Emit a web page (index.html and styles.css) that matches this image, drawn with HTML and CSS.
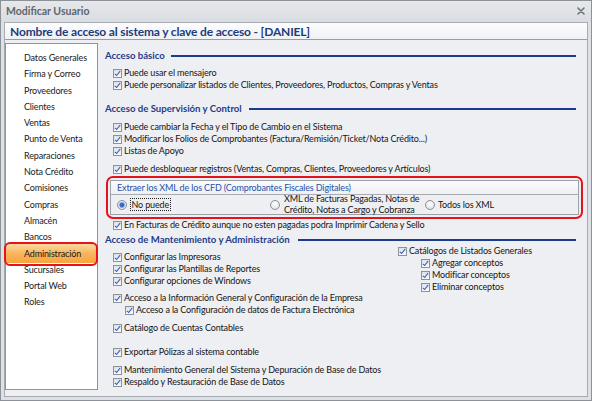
FILE: index.html
```html
<!DOCTYPE html>
<html lang="es">
<head>
<meta charset="utf-8">
<title>Modificar Usuario</title>
<link rel="stylesheet" href="styles.css">
</head>
<body>
<div class="window">
  <div class="titlebar">
    <span class="title">Modificar Usuario</span>
    <svg class="close" width="8" height="8" viewBox="0 0 8 8"><path d="M1 1 L7 7 M7 1 L1 7" stroke="#6f747b" stroke-width="1.6" stroke-linecap="round"/></svg>
  </div>
  <div class="panel">
    <div class="header">Nombre de acceso al sistema y clave de acceso - [DANIEL]</div>
    <div class="main">
      <ul class="sidebar">
        <li>Datos Generales</li>
        <li>Firma y Correo</li>
        <li>Proveedores</li>
        <li>Clientes</li>
        <li>Ventas</li>
        <li>Punto de Venta</li>
        <li>Reparaciones</li>
        <li>Nota Crédito</li>
        <li>Comisiones</li>
        <li>Compras</li>
        <li>Almacén</li>
        <li>Bancos</li>
        <li class="active">Administración</li>
        <li>Sucursales</li>
        <li>Portal Web</li>
        <li>Roles</li>
      </ul>
      <div class="content">
        <div class="sec"><span>Acceso básico</span><i></i></div>
        <div class="row first"><span class="cb"></span>Puede usar el mensajero</div>
        <div class="row"><span class="cb"></span>Puede personalizar listados de Clientes, Proveedores, Productos, Compras y Ventas</div>

        <div class="sec sec-2"><span>Acceso de Supervisión y Control</span><i></i></div>
        <div class="row first"><span class="cb"></span>Puede cambiar la Fecha y el Tipo de Cambio en el Sistema</div>
        <div class="row"><span class="cb"></span>Modificar los Folios de Comprobantes (Factura/Remisión/Ticket/Nota Crédito...)</div>
        <div class="row"><span class="cb"></span>Listas de Apoyo</div>
        <div class="row spaced"><span class="cb"></span>Puede desbloquear registros (Ventas, Compras, Clientes, Proveedores y Artículos)</div>

        <div class="xml">
          <div class="xml-box">
            <div class="xml-title">Extraer los XML de los CFD (Comprobantes Fiscales Digitales)</div>
            <div class="xml-opts">
              <div class="opt opt-1"><span class="radio on"></span><span class="focus">No puede</span></div>
              <div class="opt opt-2"><span class="radio"></span><span class="two">XML de Facturas Pagadas, Notas de<br>Crédito, Notas a Cargo y Cobranza</span></div>
              <div class="opt opt-3"><span class="radio"></span><span>Todos los XML</span></div>
            </div>
          </div>
        </div>
        <div class="row"><span class="cb"></span>En Facturas de Crédito aunque no esten pagadas podra Imprimir Cadena y Sello</div>

        <div class="sec sec-3"><span>Acceso de Mantenimiento y Administración</span><i></i></div>
        <div class="cols">
          <div class="col-left">
            <div class="row"><span class="cb"></span>Configurar las Impresoras</div>
            <div class="row"><span class="cb"></span>Configurar las Plantillas de Reportes</div>
            <div class="row"><span class="cb"></span>Configurar opciones de Windows</div>
            <div class="row gap-s"><span class="cb"></span>Acceso a la Información General y Configuración de la Empresa</div>
            <div class="row sub"><span class="cb"></span>Acceso a la Configuración de datos de Factura Electrónica</div>
            <div class="row spaced"><span class="cb"></span>Catálogo de Cuentas Contables</div>
            <div class="row gap-l"><span class="cb"></span>Exportar Pólizas al sistema contable</div>
            <div class="row spaced"><span class="cb"></span>Mantenimiento General del Sistema y Depuración de Base de Datos</div>
            <div class="row"><span class="cb"></span>Respaldo y Restauración de Base de Datos</div>
          </div>
          <div class="col-right">
            <div class="row"><span class="cb"></span>Catálogos de Listados Generales</div>
            <div class="row sub"><span class="cb"></span>Agregar conceptos</div>
            <div class="row sub"><span class="cb"></span>Modificar conceptos</div>
            <div class="row sub"><span class="cb"></span>Eliminar conceptos</div>
          </div>
        </div>
      </div>
    </div>
  </div>
</div>
</body>
</html>
```
FILE: styles.css
```css
* { box-sizing: border-box; margin: 0; padding: 0; }
html, body { margin: 0; background: #dadde2; }
body {
  font-family: Lato, "Open Sans", "Liberation Sans", sans-serif;
  font-size: 9px;
  letter-spacing: -0.15px;
  color: #151515;
}
.window {
  width: 592px;
  height: 401px;
  border: 1px solid #8d9299;
  background: linear-gradient(#e6e8eb, #d9dce1 21px, #dde0e5 21px);
  padding: 0 3px 3px;
  display: flex;
  flex-direction: column;
}
.titlebar {
  height: 21px;
  flex: none;
  display: flex;
  align-items: center;
  justify-content: space-between;
  padding: 0 3px 1px 2px;
}
.title { font-weight: 700; font-size: 10.5px; letter-spacing: 0; color: #60666e; }
.close { display: block; }

.panel {
  flex: 1;
  border: 1px solid #a6abb2;
  background: #eeeff3;
  display: flex;
  flex-direction: column;
}
.header {
  height: 17px;
  flex: none;
  line-height: 17px;
  padding-left: 5px;
  font-size: 12px;
  font-weight: 700;
  letter-spacing: -0.16px;
  color: #1d3c7c;
  background: linear-gradient(#fdfdfe, #eff1f4);
  border-bottom: 1px solid #989da4;
}
.main { flex: 1; display: flex; padding-top: 3px; }

.sidebar {
  width: 93px;
  height: 347px;
  flex: none;
  background: #fff;
  border: 1px solid #8f949b;
  list-style: none;
  padding-top: 6px;
  font-size: 9px;
  color: #1a1a1a;
}
.sidebar li { height: 16.3px; line-height: 16.3px; padding-left: 18px; white-space: nowrap; }
.sidebar li.active {
  position: relative;
  height: 19px;
  line-height: 19px;
  margin: -1.35px 1px -1.35px 0;
  background: linear-gradient(#fdd9a0, #f9b257 55%, #f7a640);
}
.sidebar li.active::after {
  content: "";
  position: absolute;
  left: -2px; right: -2px; top: -2.5px; bottom: -2.5px;
  border: 2px solid #e3141b;
  border-radius: 6px;
}

.content { flex: 1; padding: 7px 11px 0 7px; }
.sec {
  display: flex;
  align-items: center;
  height: 12px;
  line-height: 12px;
  font-weight: 700;
  font-size: 9.6px;
  letter-spacing: 0;
  color: #1f3d8a;
  white-space: nowrap;
}
.sec i { flex: 1; height: 2px; background: #1b3c8c; margin-left: 6px; }
.sec-2 { margin-top: 12px; }
.sec-2 i { margin-left: 7px; }
.sec-3 { margin-top: 3px; }
.sec-3 i { margin-left: 8px; }

.row {
  height: 12px;
  line-height: 12px;
  display: flex;
  align-items: center;
  padding-left: 8px;
  white-space: nowrap;
}
.sec + .row.first { margin-top: 5px; }
.sec-2 + .row.first { margin-top: 6px; }
.row.spaced { margin-top: 6px; }
.row.gap-s { margin-top: 5px; }
.row.gap-l { margin-top: 12px; }
.row.sub { padding-left: 20px; }

.cb {
  position: relative;
  flex: none;
  width: 9px;
  height: 9px;
  margin-right: 2px;
  border: 1px solid #8e9196;
  background: linear-gradient(#dde1e7, #fafbfc);
}
.cb::after {
  content: "";
  position: absolute;
  left: 2.3px;
  top: 0.3px;
  width: 2.4px;
  height: 4.8px;
  border: solid #2b5dc2;
  border-width: 0 1.4px 1.4px 0;
  transform: rotate(40deg);
}

.xml {
  margin: 1px -7px 0 1px;
  border: 2px solid #e3141b;
  border-radius: 7px;
  padding: 2px;
}
.xml-box { border: 1px solid #9ea2a8; height: 35px; }
.xml-title {
  height: 14px;
  line-height: 14px;
  padding-left: 6px;
  color: #2752a8;
  border-bottom: 1px solid #a9adb3;
  background: linear-gradient(#fafbfc, #eef0f3);
  white-space: nowrap;
}
.xml-opts { height: 19px; display: flex; align-items: center; }
.opt { display: flex; align-items: center; white-space: nowrap; }
.opt-1 { width: 159px; padding-left: 6px; }
.opt-2 { width: 154.5px; }
.opt-3 { flex: 1; }
.radio {
  flex: none;
  width: 10px;
  height: 10px;
  border-radius: 50%;
  border: 1px solid #8d9095;
  background: radial-gradient(circle at 50% 35%, #ffffff, #d9dce1);
  margin-right: 4px;
}
.radio.on {
  background: radial-gradient(circle, #3a6cc9 0 2px, #8fb2e8 2.6px, #e6ecf5 3.6px);
}
.opt-1 .radio { margin-right: 2.5px; }
.opt-3 .radio { margin-right: 3.5px; }
.focus { border: 1px dotted #222; padding: 0 1px; line-height: 11px; }
.two { line-height: 10.5px; }

.cols { display: flex; }
.col-left { width: 293px; flex: none; padding-top: 5px; }
.col-right { margin-top: -1px; }
.col-right .row { padding-left: 0; }
.col-right .row.sub { padding-left: 23px; }
```
